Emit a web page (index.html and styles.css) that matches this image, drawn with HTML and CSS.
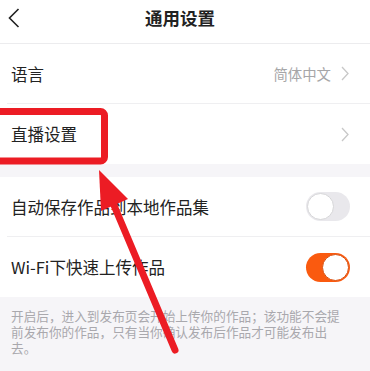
FILE: index.html
```html
<html lang="zh-CN">

<head>
  <meta charset="UTF-8">
  <meta name="viewport" content="width=device-width, initial-scale=1.0">
  <title>通用设置</title>
  <link rel="stylesheet" href="styles.css">
</head>

<body>
  <div class="page">
    <div class="header">
      <svg class="back" width="12" height="20" viewBox="0 0 12 20">
        <path d="M10.5 1 L1.5 10 L10.5 19" fill="none" stroke="#222" stroke-width="1.6" />
      </svg>
      <div class="title">通用设置</div>
    </div>

    <div class="group">
      <div class="item line">
        <span class="label">语言</span>
        <span class="value">简体中文</span>
        <svg class="chevron" width="8" height="15" viewBox="0 0 8 15">
          <path d="M1 1 L7 7.5 L1 14" fill="none" stroke="#c8c8c8" stroke-width="1.3" />
        </svg>
      </div>
      <div class="item">
        <span class="label">直播设置</span>
        <svg class="chevron" width="8" height="15" viewBox="0 0 8 15">
          <path d="M1 1 L7 7.5 L1 14" fill="none" stroke="#c8c8c8" stroke-width="1.3" />
        </svg>
      </div>
    </div>

    <div class="gap"></div>

    <div class="group">
      <div class="item line">
        <span class="label">自动保存作品到本地作品集</span>
        <div class="switch"><div class="knob"></div></div>
      </div>
      <div class="item">
        <span class="label">Wi-Fi下快速上传作品</span>
        <div class="switch on"><div class="knob"></div></div>
      </div>
    </div>

    <div class="note">
      开启后，进入到发布页会开始上传你的作品；该功能不会提前发布你的作品，只有当你确认发布后作品才可能发布出去。
    </div>

    <!-- red markup drawn over the screenshot -->
    <svg class="markup" width="370" height="371" viewBox="0 0 370 371">
      <rect x="-10" y="111.5" width="114.5" height="49.5" rx="4" fill="none" stroke="#ec1c24" stroke-width="7" />
      <line x1="113" y1="203" x2="175" y2="350" stroke="#ec1c24" stroke-width="7" stroke-linecap="round" />
      <polygon points="99,170 128,199 101,211" fill="#ec1c24" />
    </svg>
  </div>
</body>

</html>
```

FILE: styles.css
```css
body {
  margin: 0;
  font-family: "Noto Sans CJK SC", "Noto Sans", sans-serif;
  color: #222;
  background-color: #f6f5f8;
}

.page {
  position: relative;
  width: 370px;
  height: 371px;
  overflow: hidden;
  background-color: #f6f5f8;
}

.header {
  height: 44px;
  display: flex;
  align-items: center;
  justify-content: center;
  background-color: white;
  border-bottom: 1px solid #ececee;
  box-sizing: border-box;
  position: relative;
}

.back {
  position: absolute;
  left: 8px;
  top: 8px;
}

.title {
  font-size: 17.5px;
  font-weight: bold;
  margin-right: 10px;
  margin-top: -8px;
}

.group {
  background-color: white;
  padding-left: 7px;
}

.item {
  height: 60px;
  display: flex;
  align-items: center;
  padding-left: 4px;
  padding-right: 20px;
  box-sizing: border-box;
}

.line {
  border-bottom: 1px solid #efeff1;
}

.label {
  flex: 1;
  font-size: 16.5px;
}

.value {
  font-size: 14.4px;
  color: #a6a6a8;
  margin-right: 10px;
}

.chevron {
  margin-right: 1px;
}

.gap {
  height: 13px;
}

.switch {
  width: 44px;
  height: 29px;
  border-radius: 15px;
  background-color: #e9e8ec;
  box-sizing: border-box;
  padding: 1px;
  display: flex;
  justify-content: flex-start;
}

.knob {
  width: 27px;
  height: 27px;
  border-radius: 50%;
  background-color: white;
  border: 1px solid #d6d6d8;
  box-sizing: border-box;
}

.switch.on {
  background-color: #fa5a0f;
  justify-content: flex-end;
}

.switch.on .knob {
  border-color: #d9500f;
}

.note {
  padding: 11px 22px 0 11px;
  font-size: 12.65px;
  line-height: 16px;
  color: #a9a8ad;
}

.markup {
  position: absolute;
  left: 0;
  top: 0;
  pointer-events: none;
}
```
